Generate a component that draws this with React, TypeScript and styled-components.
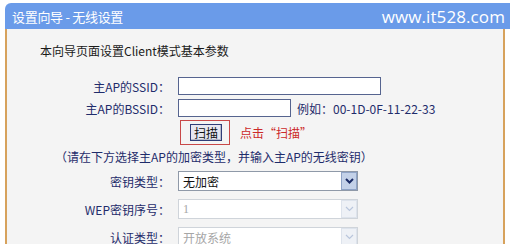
import styled, { createGlobalStyle } from 'styled-components';

const GlobalStyle = createGlobalStyle`
  html, body {
    margin: 0;
    padding: 0;
    background: #ffffff;
  }
  body {
    font-family: "Noto Sans CJK SC", "DejaVu Sans", sans-serif;
    font-size: 12px;
  }
`;

const Page = styled.div`
  padding: 3px 0 0 5px;
  width: 505px;
  height: 241px;
  overflow: hidden;
`;

const Header = styled.div`
  height: 26px;
  background: #6a9be9;
  border-top-left-radius: 6px;
  display: flex;
  align-items: center;
  justify-content: space-between;
  padding: 0 5px 0 7px;
  color: #ffffff;
`;

const Title = styled.span`
  font-size: 13px;
  letter-spacing: -0.3px;
`;

const Site = styled.span`
  font-family: "Open Sans", "DejaVu Sans", sans-serif;
  font-size: 17px;
  letter-spacing: 0.1px;
`;

const Panel = styled.div`
  width: 496px;
  height: 215px;
  background: #f4f4f4;
  border-left: 2px solid #d7a25c;
  border-right: 2px solid #d7a25c;
  padding-top: 14px;
`;

const Intro = styled.div`
  margin-left: 33px;
  line-height: 16px;
  color: #1a1a1a;
`;

const Row = styled.div<{ $h: number; $mt: number }>`
  display: grid;
  grid-template-columns: 163px 1fr;
  column-gap: 8px;
  align-items: center;
  height: ${(p) => p.$h}px;
  margin-top: ${(p) => p.$mt}px;
`;

const Label = styled.span`
  text-align: right;
  color: #1f2c6b;
  white-space: nowrap;
`;

const Controls = styled.div`
  display: flex;
  align-items: center;
  gap: 6px;
  height: 100%;
`;

const TextInput = styled.div<{ $w: number }>`
  box-sizing: border-box;
  width: ${(p) => p.$w}px;
  height: 18px;
  background: #ffffff;
  border: 1px solid #56648f;
`;

const Hint = styled.span`
  color: #1f2c6b;
  white-space: nowrap;
`;

const ScanFrame = styled.div`
  box-sizing: border-box;
  margin-left: 2px;
  width: 50px;
  height: 25px;
  border: 1px solid #c84848;
  display: flex;
  align-items: center;
  padding-left: 9px;
`;

const ScanButton = styled.div`
  box-sizing: border-box;
  width: 32px;
  height: 17px;
  border: 1px solid #2f3d78;
  background: #e7e7f1;
  box-shadow: inset -1px -1px 0 #b8bccc;
  display: flex;
  align-items: center;
  justify-content: center;
  color: #111;
  font-size: 12px;
`;

const RedNote = styled.span`
  color: #cc2a2a;
  margin-left: 4px;
`;

const Notice = styled.div`
  margin-top: 4px;
  margin-left: 48px;
  line-height: 16px;
  color: #1f2c6b;
  white-space: nowrap;
`;

const SelectBox = styled.div<{ $disabled?: boolean }>`
  box-sizing: border-box;
  width: 180px;
  height: 20px;
  display: flex;
  align-items: center;
  justify-content: space-between;
  background: #ffffff;
  border: 1px solid ${(p) => (p.$disabled ? '#cfd4da' : '#8f99a8')};
  padding-left: 4px;
  color: ${(p) => (p.$disabled ? '#a6a6a6' : '#111')};
  font-family: ${(p) =>
    p.$disabled ? '"Liberation Serif", "Noto Sans CJK SC", serif' : 'inherit'};
`;

const ArrowBox = styled.div<{ $disabled?: boolean }>`
  box-sizing: border-box;
  width: 16px;
  height: 18px;
  display: flex;
  align-items: center;
  justify-content: center;
  background: ${(p) => (p.$disabled ? '#eef1f6' : '#c3d1e8')};
  border: 1px solid ${(p) => (p.$disabled ? '#dde3ec' : '#8ea3c6')};
`;

const DisabledText = styled.span`
  font-family: "Noto Sans CJK SC", sans-serif;
`;

function Chevron({ disabled }: { disabled?: boolean }) {
  return (
    <svg width="9" height="6" viewBox="0 0 9 6">
      <path
        d="M1 1 L4.5 4.5 L8 1"
        fill="none"
        stroke={disabled ? '#b9c6dc' : '#1b2c66'}
        strokeWidth={disabled ? 1.2 : 2}
      />
    </svg>
  );
}

function Select({ value, disabled }: { value: string; disabled?: boolean }) {
  return (
    <SelectBox $disabled={disabled}>
      {value === '1' ? value : <DisabledText>{value}</DisabledText>}
      <ArrowBox $disabled={disabled}>
        <Chevron disabled={disabled} />
      </ArrowBox>
    </SelectBox>
  );
}

export default function App() {
  return (
    <>
      <GlobalStyle />
      <Page>
        <Header>
          <Title>设置向导 - 无线设置</Title>
          <Site>www.it528.com</Site>
        </Header>
        <Panel>
          <Intro>本向导页面设置Client模式基本参数</Intro>
          <Row $h={18} $mt={18}>
            <Label>主AP的SSID：</Label>
            <Controls>
              <TextInput $w={203} />
            </Controls>
          </Row>
          <Row $h={18} $mt={4}>
            <Label>主AP的BSSID：</Label>
            <Controls>
              <TextInput $w={113} />
              <Hint>例如：00-1D-0F-11-22-33</Hint>
            </Controls>
          </Row>
          <Row $h={25} $mt={3}>
            <span />
            <Controls>
              <ScanFrame>
                <ScanButton>扫描</ScanButton>
              </ScanFrame>
              <RedNote>点击“扫描”</RedNote>
            </Controls>
          </Row>
          <Notice>（请在下方选择主AP的加密类型，并输入主AP的无线密钥）</Notice>
          <Row $h={20} $mt={6}>
            <Label>密钥类型：</Label>
            <Controls>
              <Select value="无加密" />
            </Controls>
          </Row>
          <Row $h={20} $mt={8}>
            <Label>WEP密钥序号：</Label>
            <Controls>
              <Select value="1" disabled />
            </Controls>
          </Row>
          <Row $h={20} $mt={8}>
            <Label>认证类型：</Label>
            <Controls>
              <Select value="开放系统" disabled />
            </Controls>
          </Row>
        </Panel>
      </Page>
    </>
  );
}
